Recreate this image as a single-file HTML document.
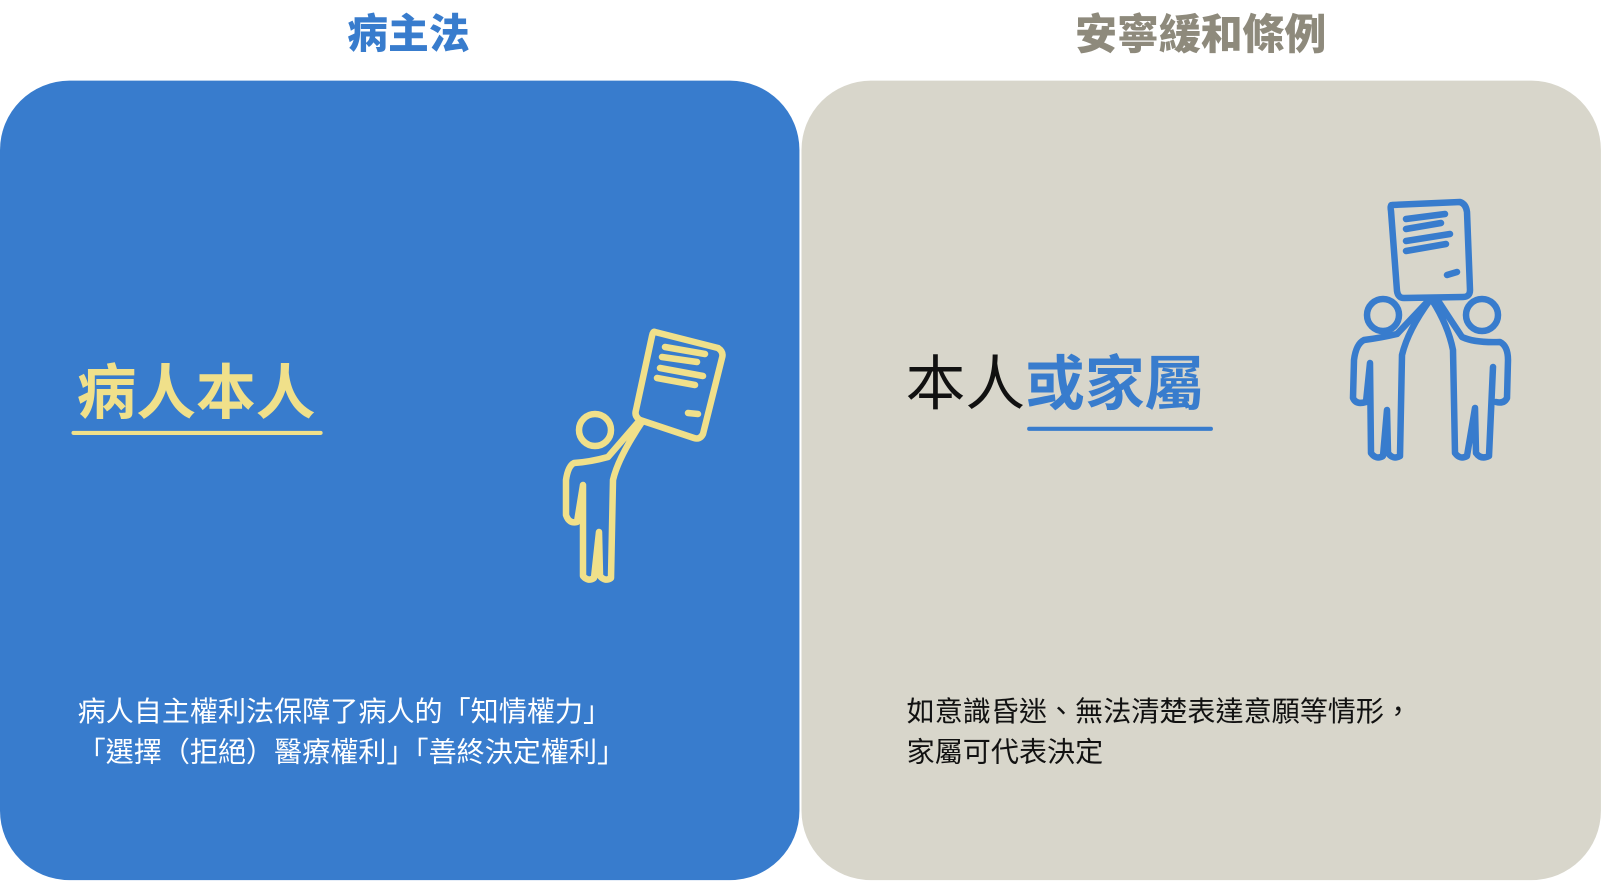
<!DOCTYPE html>
<html><head><meta charset="utf-8"><style>
html,body{margin:0;padding:0;background:#fff;width:1601px;height:881px;overflow:hidden;position:relative;font-family:"Liberation Sans","Noto Sans CJK TC",sans-serif}
#w{position:absolute;left:0;top:0;width:1568px;height:863px;transform:scale(1.021);transform-origin:0 0}
.t{position:absolute;top:10px;font-size:40px;font-weight:900;line-height:48px;white-space:nowrap}
.card{position:absolute;top:79px;width:783px;height:783px;border-radius:68px}
.abs{position:absolute;white-space:nowrap}
.body{font-size:27.5px;line-height:40px}
</style></head><body>
<div id="w">
<div class="t" style="left:340px;color:#387CCD">病主法</div>
<div class="t" style="left:1053px;color:#8E8A7C;font-size:41px">安寧緩和條例</div>
<div class="card" style="left:0;background:#387CCD"></div>
<div class="card" style="left:785px;background:#D8D6CB"></div>

<div class="abs" style="left:75px;top:351px;font-size:58.5px;font-weight:700;line-height:70px;color:#F0E08A">病人本人</div>
<div class="abs" style="left:70px;top:422px;width:246px;height:4px;background:#F0E08A;border-radius:2px"></div>

<div class="abs" style="left:887px;top:342px;font-size:58.5px;line-height:70px;color:#111">本人<b style="color:#387CCD">或家屬</b></div>
<div class="abs" style="left:1006px;top:418px;width:182px;height:4px;background:#387CCD;border-radius:2px"></div>

<div class="abs body" style="left:76px;top:677px;color:#fff">病人自主權利法保障了病人的「知情權力」<br>「選擇（拒絕）醫療權利」「善終決定權利」</div>
<div class="abs body" style="left:888px;top:677px;color:#111">如意識昏迷、無法清楚表達意願等情形，<br>家屬可代表決定</div>
</div>

<svg class="abs" style="left:0;top:0" width="1601" height="881" viewBox="0 0 1601 881" fill="none" stroke-width="6.5" stroke-linecap="round" stroke-linejoin="round">
<g stroke="#F0E08A">
<path d="M655 332 L718 348 Q724 352 722 358 L703 434 Q700 440 694 438 L640 420 Q634 416 636 410 L652 336 Q653 331 655 332Z"/>
<path d="M665 347 L705 354 M662 357 L697 362 M660 368 L703 376 M657 378 L695 385 M688 413 L698 414"/>
<circle cx="595" cy="430" r="16"/>
<path d="M640 420 L608 457 Q590 462 574 463 Q568 466 566 480 L566 515 Q569 524 577 522 L583 485 M583 485 L583 576 Q588 582 594 578 L599 532 L600 576 Q605 582 611 578 L613 480 Q618 458 642 422"/>
</g>
<g stroke="#387CCD">
<path d="M1392 205 L1460 202 Q1466 204 1467 212 L1470 290 Q1470 297 1463 297 L1404 298 Q1398 298 1397 291 L1391 211 Q1390 205 1392 205Z"/>
<path d="M1406 219 L1445 214 M1406 229 L1441 223 M1406 241 L1450 234 M1406 251 L1446 244 M1447 275 L1457 272"/>
<circle cx="1383" cy="315" r="16"/>
<circle cx="1482" cy="315" r="16"/>
<path d="M1430 299 Q1412 318 1397 334 Q1380 338 1364 340 Q1356 344 1354 360 L1353 398 Q1356 405 1366 402 L1370 363 L1371 453 Q1376 460 1383 456 L1387 410 L1388 453 Q1393 460 1400 456 L1402 355 Q1408 330 1430 300"/>
<path d="M1432 300 Q1448 325 1453 350 L1455 453 Q1460 460 1467 456 L1475 408 L1476 453 Q1481 460 1489 456 L1493 367 M1437 299 Q1452 322 1462 337 Q1475 343 1500 342 Q1508 346 1508 360 L1507 398 Q1504 404 1496 402"/>
</g>
</svg>
</body></html>
